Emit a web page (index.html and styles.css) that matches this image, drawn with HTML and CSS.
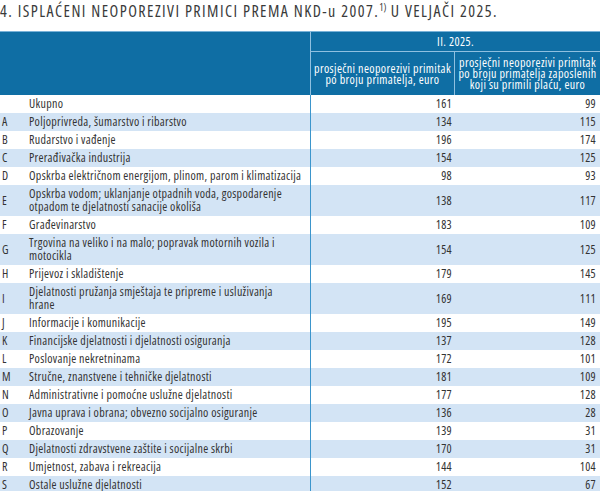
FILE: index.html
```html
<!DOCTYPE html>
<html lang="hr">
<head>
<meta charset="utf-8">
<title>Isplaćeni neoporezivi primici</title>
<link rel="stylesheet" href="styles.css">
</head>
<body>
<h1 class="title">4. ISPLAĆENI NEOPOREZIVI PRIMICI PREMA NKD-u 2007.<sup class="note">1)</sup> U VELJAČI 2025.</h1>
<table class="data">
  <colgroup><col class="c-code"><col class="c-name"><col class="c-v1"><col class="c-v2"></colgroup>
  <thead>
    <tr><th class="h-blank" colspan="2" rowspan="2"></th><th class="h-period" colspan="2">II. 2025.</th></tr>
    <tr><th class="h-sub">prosječni neoporezivi primitak<br>po broju primatelja, euro</th><th class="h-sub">prosječni neoporezivi primitak<br>po broju primatelja zaposlenih<br>koji su primili plaću, euro</th></tr>
  </thead>
  <tbody>
    <tr><td class="code"></td><td class="name">Ukupno</td><td class="num v1">161</td><td class="num v2">99</td></tr>
    <tr><td class="code">A</td><td class="name">Poljoprivreda, šumarstvo i ribarstvo</td><td class="num v1">134</td><td class="num v2">115</td></tr>
    <tr><td class="code">B</td><td class="name">Rudarstvo i vađenje</td><td class="num v1">196</td><td class="num v2">174</td></tr>
    <tr><td class="code">C</td><td class="name">Prerađivačka industrija</td><td class="num v1">154</td><td class="num v2">125</td></tr>
    <tr><td class="code">D</td><td class="name">Opskrba električnom energijom, plinom, parom i klimatizacija</td><td class="num v1">98</td><td class="num v2">93</td></tr>
    <tr><td class="code">E</td><td class="name">Opskrba vodom; uklanjanje otpadnih voda, gospodarenje<br>otpadom te djelatnosti sanacije okoliša</td><td class="num v1">138</td><td class="num v2">117</td></tr>
    <tr><td class="code">F</td><td class="name">Građevinarstvo</td><td class="num v1">183</td><td class="num v2">109</td></tr>
    <tr><td class="code">G</td><td class="name">Trgovina na veliko i na malo; popravak motornih vozila i<br>motocikla</td><td class="num v1">154</td><td class="num v2">125</td></tr>
    <tr><td class="code">H</td><td class="name">Prijevoz i skladištenje</td><td class="num v1">179</td><td class="num v2">145</td></tr>
    <tr><td class="code">I</td><td class="name">Djelatnosti pružanja smještaja te pripreme i usluživanja<br>hrane</td><td class="num v1">169</td><td class="num v2">111</td></tr>
    <tr><td class="code">J</td><td class="name">Informacije i komunikacije</td><td class="num v1">195</td><td class="num v2">149</td></tr>
    <tr><td class="code">K</td><td class="name">Financijske djelatnosti i djelatnosti osiguranja</td><td class="num v1">137</td><td class="num v2">128</td></tr>
    <tr><td class="code">L</td><td class="name">Poslovanje nekretninama</td><td class="num v1">172</td><td class="num v2">101</td></tr>
    <tr><td class="code">M</td><td class="name">Stručne, znanstvene i tehničke djelatnosti</td><td class="num v1">181</td><td class="num v2">109</td></tr>
    <tr><td class="code">N</td><td class="name">Administrativne i pomoćne uslužne djelatnosti</td><td class="num v1">177</td><td class="num v2">128</td></tr>
    <tr><td class="code">O</td><td class="name">Javna uprava i obrana; obvezno socijalno osiguranje</td><td class="num v1">136</td><td class="num v2">28</td></tr>
    <tr><td class="code">P</td><td class="name">Obrazovanje</td><td class="num v1">139</td><td class="num v2">31</td></tr>
    <tr><td class="code">Q</td><td class="name">Djelatnosti zdravstvene zaštite i socijalne skrbi</td><td class="num v1">170</td><td class="num v2">31</td></tr>
    <tr><td class="code">R</td><td class="name">Umjetnost, zabava i rekreacija</td><td class="num v1">144</td><td class="num v2">104</td></tr>
    <tr><td class="code">S</td><td class="name">Ostale uslužne djelatnosti</td><td class="num v1">152</td><td class="num v2">67</td></tr>
  </tbody>
</table>
</body>
</html>
```
FILE: styles.css
```css
html, body {
  margin: 0;
  padding: 0;
  background: #ffffff;
}
body {
  width: 600px;
  font-family: "Open Sans", "DejaVu Sans", sans-serif;
  color: #333333;
}
.title {
  margin: 0 0 10px;
  padding-top: 1px;
  font-size: 16px;
  line-height: 20px;
  font-weight: 400;
  font-stretch: 75%;
  letter-spacing: 1.45px;
  color: #3a3a3a;
  white-space: nowrap;
}
.note {
  font-size: 10px;
  line-height: 10px;
  letter-spacing: 0;
  vertical-align: 6px;
}
.data {
  width: 600px;
  table-layout: fixed;
  border-collapse: separate;
  border-spacing: 0;
  font-size: 12px;
  line-height: 13px;
  font-stretch: 75%;
  letter-spacing: 0.3px;
}
.c-code { width: 27px; }
.c-name { width: 283px; }
.c-v1 { width: 144px; }
.c-v2 { width: 146px; }
.data th {
  background: #0f6ea4;
  color: #ffffff;
  font-weight: 400;
  text-align: center;
  vertical-align: middle;
  padding: 0;
  border-top: 1px solid #79b2d8;
  line-height: 11px;
  letter-spacing: 0.4px;
}
.h-period {
  height: 19px;
  border-left: 1px solid #8fc0e0;
  border-bottom: 1px solid #8fc0e0;
}
.data th.h-sub {
  height: 43px;
  border-top: 0;
  border-left: 1px solid #8fc0e0;
}
.data td {
  padding: 2px 2px 3px;
  vertical-align: middle;
  white-space: nowrap;
}
.data tbody tr:nth-child(even) td {
  background: #d3e4f5;
}
.code {
  padding-left: 2px;
}
.name {
  text-align: left;
}
.num {
  text-align: right;
}
.data td.v1 {
  border-left: 1px solid #3b95cc;
  padding-right: 2px;
}
.data td.v2 {
  padding-right: 4px;
}
```
